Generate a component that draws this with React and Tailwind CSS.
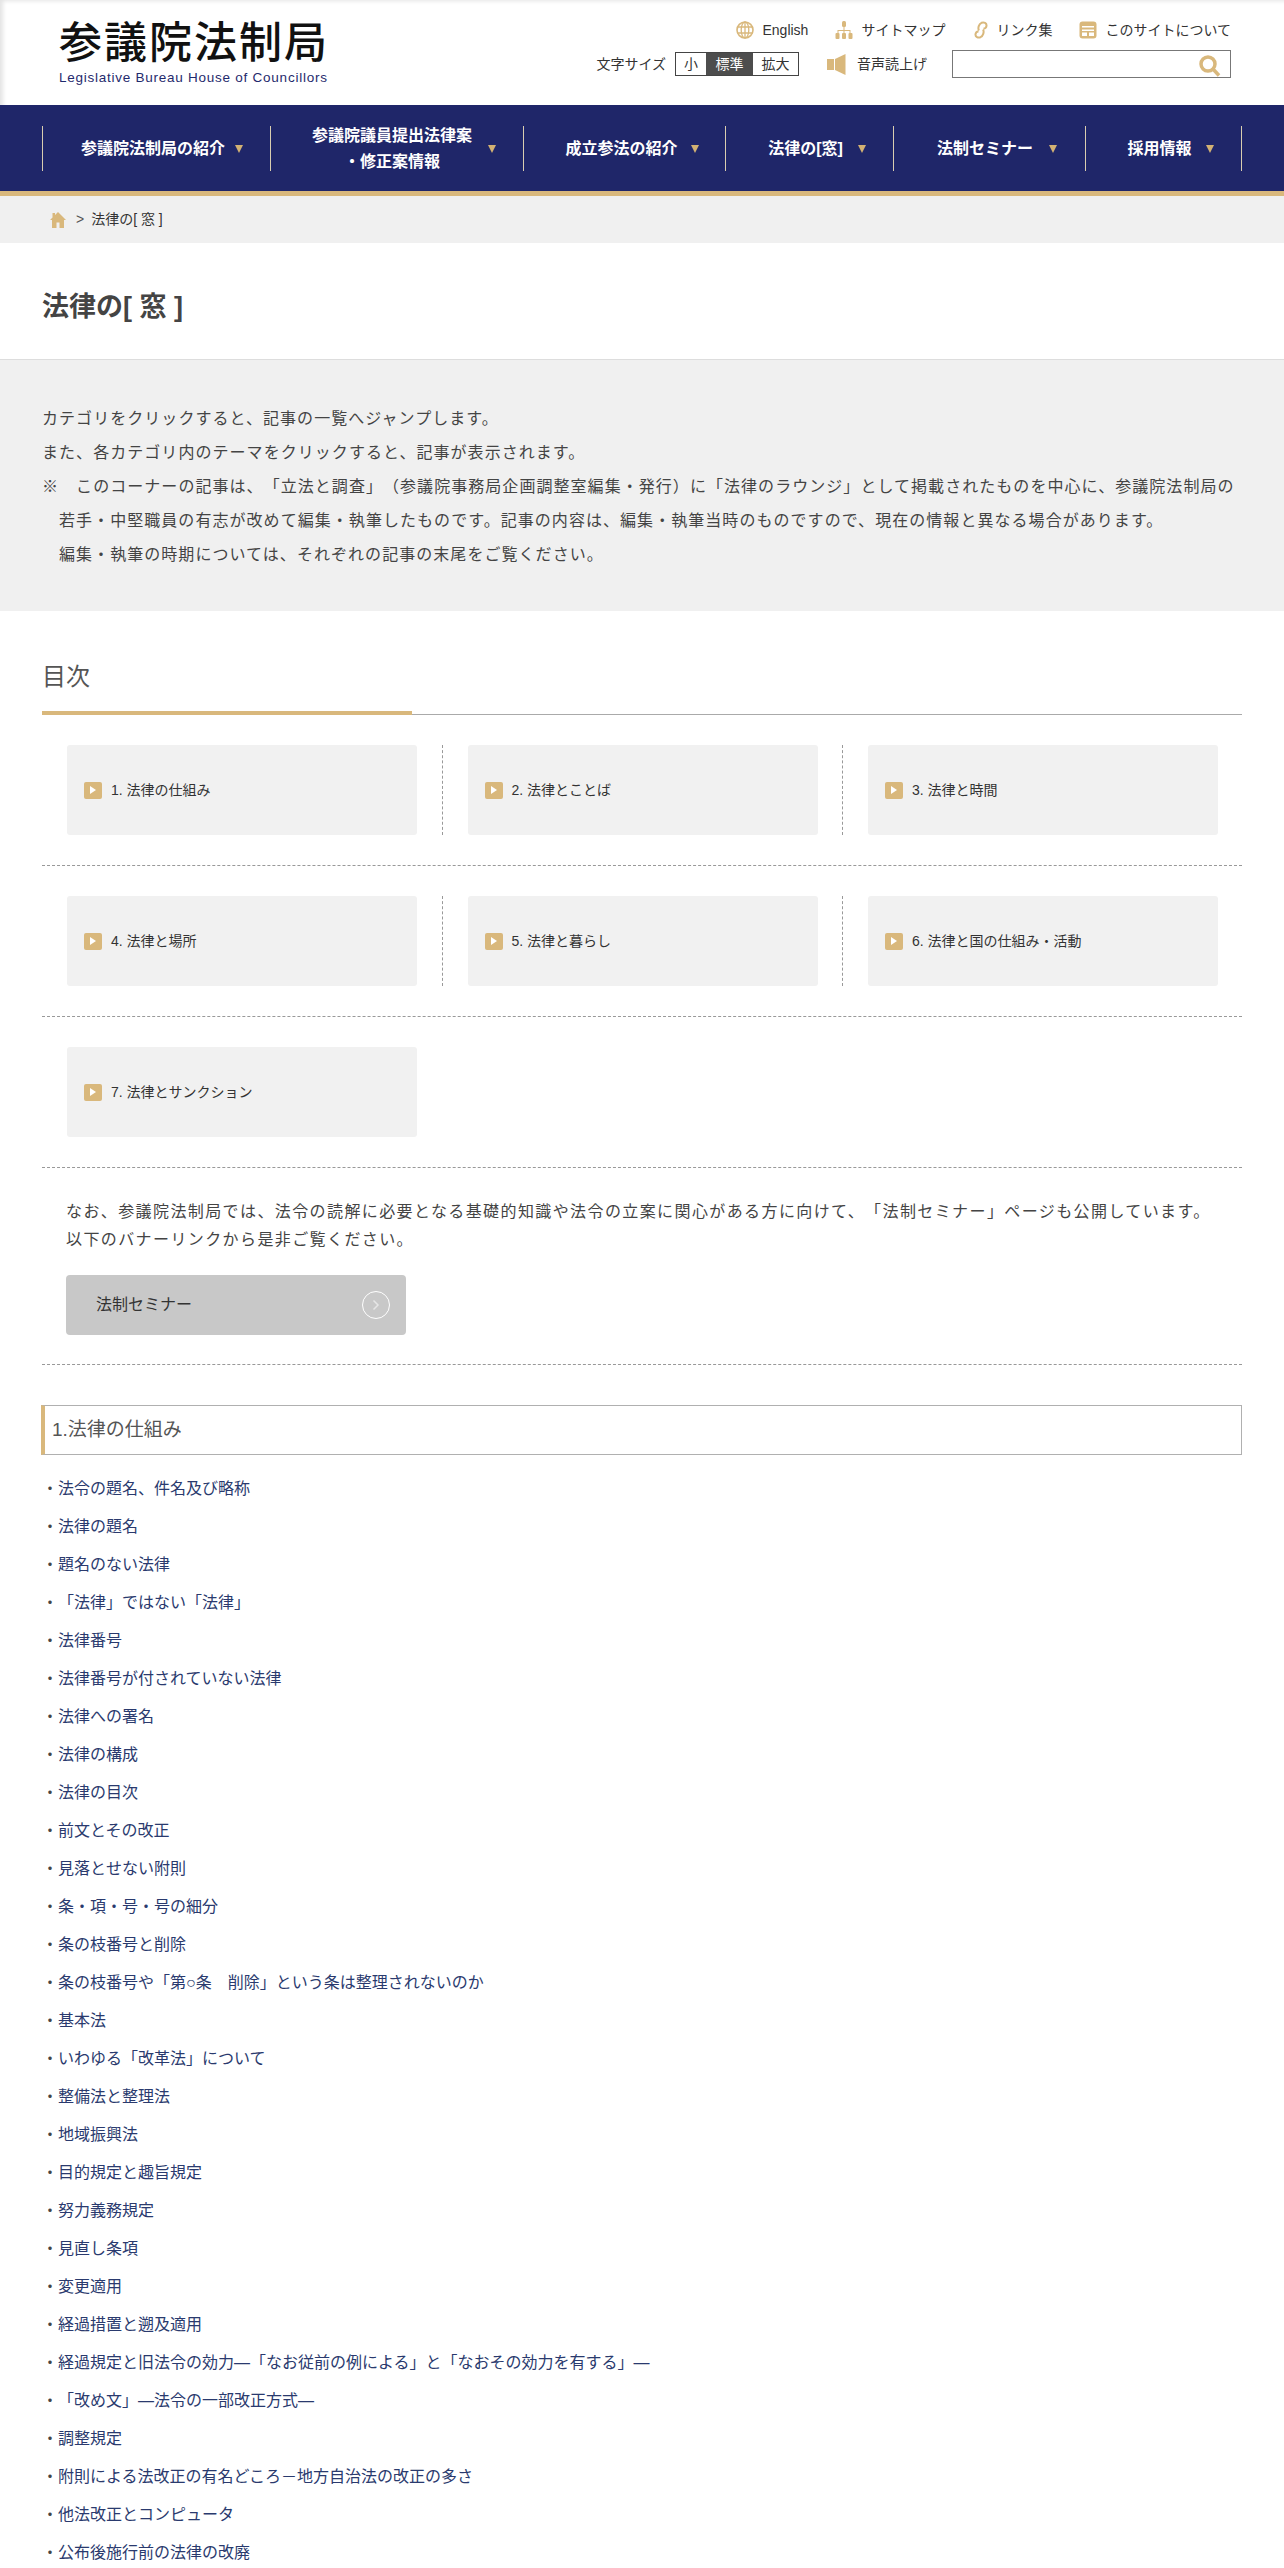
import { Fragment } from 'react';

const gold = '#d9b87c';

const navItems = [
    { label: ['参議院法制局の紹介'], cell: 'w-[228px] gap-[10px] pl-[11px]' },
    { label: ['参議院議員提出法律案', '・修正案情報'], cell: 'w-[253px] gap-[16px] pl-[14px]' },
    { label: ['成立参法の紹介'], cell: 'w-[202px] gap-[13px] pl-[15px]' },
    { label: ['法律の[窓]'], cell: 'w-[168px] gap-[15px] pl-[15px]' },
    { label: ['法制セミナー'], cell: 'w-[192px] gap-[16px] pl-[15px]' },
    { label: ['採用情報'], cell: 'w-[156px] gap-[14px] pl-[14px]' }
];

const tocRows = [
    ['1. 法律の仕組み', '2. 法律とことば', '3. 法律と時間'],
    ['4. 法律と場所', '5. 法律と暮らし', '6. 法律と国の仕組み・活動'],
    ['7. 法律とサンクション']
];

const links = [
    '法令の題名、件名及び略称',
    '法律の題名',
    '題名のない法律',
    '「法律」ではない「法律」',
    '法律番号',
    '法律番号が付されていない法律',
    '法律への署名',
    '法律の構成',
    '法律の目次',
    '前文とその改正',
    '見落とせない附則',
    '条・項・号・号の細分',
    '条の枝番号と削除',
    '条の枝番号や「第○条　削除」という条は整理されないのか',
    '基本法',
    'いわゆる「改革法」について',
    '整備法と整理法',
    '地域振興法',
    '目的規定と趣旨規定',
    '努力義務規定',
    '見直し条項',
    '変更適用',
    '経過措置と遡及適用',
    '経過規定と旧法令の効力―「なお従前の例による」と「なおその効力を有する」―',
    '「改め文」―法令の一部改正方式―',
    '調整規定',
    '附則による法改正の有名どころ－地方自治法の改正の多さ',
    '他法改正とコンピュータ',
    '公布後施行前の法律の改廃'
];

function GlobeIcon() {
    return (
        <svg width="18" height="18" viewBox="0 0 18 18" fill="none" stroke={gold} strokeWidth="1.300">
            <circle cx="9" cy="9" r="8" strokeWidth="1.600" />
            <ellipse cx="9" cy="9" rx="3.800" ry="8" />
            <path d="M9 1v16M1.500 6h15M1.500 12h15" />
        </svg>
    );
}

function SitemapIcon() {
    return (
        <svg width="18" height="18" viewBox="0 0 18 18" fill={gold}>
            <rect x="7" y="0" width="4" height="6" rx="1.5" />
            <path d="M8.5 6h1v3h6v3h-1v-2h-5v2h-1v-2h-5v2h-1V9h6z" />
            <rect x="0.5" y="12" width="4" height="6" rx="1" />
            <rect x="7" y="12" width="4" height="6" rx="1" />
            <rect x="13.5" y="12" width="4" height="6" rx="1" />
        </svg>
    );
}

function ClipIcon() {
    return (
        <svg width="14" height="18" viewBox="0 0 14 18" fill="none" stroke={gold} strokeWidth="2">
            <path d="M5 9.500 C3.500 7 5 3 7.500 1.800 C10 .8 12.800 2 12.500 4.800 C12.300 6.500 11 7.500 9.500 7.800" />
            <path d="M9 8.500 C10.500 11 9 15 6.500 16.200 C4 17.200 1.200 16 1.500 13.200 C1.700 11.500 3 10.500 4.500 10.200" />
        </svg>
    );
}

function AboutIcon() {
    return (
        <svg width="18" height="18" viewBox="0 0 18 18">
            <rect x="0.5" y="0.500" width="17" height="17" rx="3" fill={gold} />
            <rect x="3" y="5" width="12" height="1.500" fill="#fff" />
            <rect x="3" y="8.500" width="12" height="1.500" fill="#fff" />
            <rect x="3" y="11.500" width="5" height="3.500" fill="#fff" />
            <rect x="10" y="11.500" width="5" height="3.500" fill="#fff" />
        </svg>
    );
}

function SpeakerIcon() {
    return (
        <svg width="19" height="21" viewBox="0 0 19 21" fill={gold}>
            <rect x="0" y="5" width="7" height="11" />
            <path d="M8 5 L18.500 0 V21 L8 16 Z" />
        </svg>
    );
}

function SearchIcon() {
    return (
        <svg width="22" height="22" viewBox="0 0 22 22" fill="none" stroke={gold}>
            <circle cx="9" cy="9" r="7" strokeWidth="3.500" />
            <path d="M14 14l6 6.500" strokeWidth="3.500" />
        </svg>
    );
}

function HomeIcon() {
    return (
        <svg width="16" height="16" viewBox="0 0 16 16" fill={gold}>
            <path d="M8 0 L16 8 H14 V16 H9.500 V10.500 H6.500 V16 H2 V8 H0 L2.500 5.500 V1 H5 V3 Z" />
        </svg>
    );
}

function TopLink({ icon, label, className }) {
    return (
        <span className={`flex items-center ${className}`}>
            {icon}
            <span>{label}</span>
        </span>
    );
}

function Header() {
    return (
        <header className="h-[105px] flex justify-between bg-white shadow-[inset_5px_3px_4px_-2px_#e4e4e4]">
            <div className="pl-[59px] pt-[18px]">
                <div className="text-[43px] leading-[50px] tracking-[2px] text-[#111] font-medium whitespace-nowrap">
                    参議院法制局
                </div>
                <div className="text-[13.5px] leading-[16px] mt-[2px] tracking-[0.75px] text-[#1f2a6d] whitespace-nowrap">
                    Legislative Bureau House of Councillors
                </div>
            </div>
            <div className="pr-[53px] pt-[20px] flex flex-col items-end text-[14px] text-[#333]">
                <div className="flex items-center h-[20px]">
                    <TopLink className="gap-[8px]" icon={<GlobeIcon />} label="English" />
                    <TopLink className="gap-[8px] ml-[27px]" icon={<SitemapIcon />} label="サイトマップ" />
                    <TopLink className="gap-[8px] ml-[29px]" icon={<ClipIcon />} label="リンク集" />
                    <TopLink className="gap-[8px] ml-[27px]" icon={<AboutIcon />} label="このサイトについて" />
                </div>
                <div className="flex items-center mt-[10px] h-[28px]">
                    <span className="mr-[9px]">文字サイズ</span>
                    <div className="flex h-[24px] border border-[#444] leading-[22px] text-center">
                        <span className="w-[30px]">小</span>
                        <span className="w-[47px] bg-[#4d4d4d] text-white">標準</span>
                        <span className="w-[45px]">拡大</span>
                    </div>
                    <span className="ml-[28px]"><SpeakerIcon /></span>
                    <span className="ml-[11px]">音声読上げ</span>
                    <div className="ml-[25px] w-[279px] h-[28px] border border-[#777] flex items-center justify-end pr-[9px] pt-[4px]">
                        <SearchIcon />
                    </div>
                </div>
            </div>
        </header>
    );
}

function Nav() {
    return (
        <nav className="h-[91px] bg-[#1f2669] border-b-[5px] border-[#d9b87c] pl-[42px] pt-[21px]">
            <ul className="flex h-[45px] border-l border-[#d9cdb0] w-fit">
                {navItems.map((item) => (
                    <li key={item.label[0]} className={`${item.cell} border-r border-[#d9cdb0] flex items-center justify-center text-white font-bold text-[16px] leading-[26px]`}>
                        <span className="text-center whitespace-nowrap">
                            {item.label.map((line) => (
                                <div key={line}>{line}</div>
                            ))}
                        </span>
                        <span className="w-0 h-0 border-x-[4px] border-x-transparent border-t-[8px] border-t-[#d2b173] mt-[1px]" />
                    </li>
                ))}
            </ul>
        </nav>
    );
}

function Breadcrumb() {
    return (
        <div className="h-[47px] bg-[#f0f0f0] pl-[50px] flex items-center text-[14px] text-[#333]">
            <HomeIcon />
            <span className="ml-[10px] text-[#555]">&gt;</span>
            <span className="ml-[7px]">法律の[ 窓 ]</span>
        </div>
    );
}

function Intro() {
    return (
        <div className="bg-[#f0f0f0] border-t border-[#ddd] h-[252px] pl-[42px] pt-[42px] text-[16px] leading-[34px] tracking-[1.05px] text-[#444] whitespace-nowrap">
            <p>カテゴリをクリックすると、記事の一覧へジャンプします。</p>
            <p>また、各カテゴリ内のテーマをクリックすると、記事が表示されます。</p>
            <p>※　このコーナーの記事は、「立法と調査」（参議院事務局企画調整室編集・発行）に「法律のラウンジ」として掲載されたものを中心に、参議院法制局の</p>
            <p className="pl-[17px]">若手・中堅職員の有志が改めて編集・執筆したものです。記事の内容は、編集・執筆当時のものですので、現在の情報と異なる場合があります。</p>
            <p className="pl-[17px]">編集・執筆の時期については、それぞれの記事の末尾をご覧ください。</p>
        </div>
    );
}

function TocCard({ label }) {
    return (
        <a className="w-[350px] h-[90px] shrink-0 bg-[#f1f1f1] rounded-[3px] flex items-center pl-[17px] text-[14px] text-[#333]">
            <span className="w-[18px] h-[17px] bg-[#d9b87c] rounded-[2px] flex items-center justify-center mr-[9px]">
                <span className="w-0 h-0 border-y-[4px] border-y-transparent border-l-[6px] border-l-white" />
            </span>
            {label}
        </a>
    );
}

function Toc() {
    return (
        <section className="mx-[42px]">
            <h2 className="mt-[48px] text-[24px] leading-[36px] text-[#555] h-[52px]">目次</h2>
            <div className="h-[4px] border-b border-[#aaa] relative">
                <div className="w-[370px] h-[4px] bg-[#d9b87c]" />
            </div>
            {tocRows.map((row) => (
                <div key={row[0]} className="flex pt-[30px] pb-[30px] pl-[25px] border-b border-dashed border-[#999]">
                    {row.map((label, i) => (
                        <Fragment key={label}>
                            {i > 0 && <div className="w-[50.5px] flex justify-center"><div className="border-l border-dashed border-[#999]" /></div>}
                            <TocCard label={label} />
                        </Fragment>
                    ))}
                </div>
            ))}
            <div className="pl-[24px] pt-[30px] pb-[29px] border-b border-dashed border-[#999]">
                <p className="text-[16px] leading-[28px] tracking-[1.4px] text-[#444] whitespace-nowrap">
                    なお、参議院法制局では、法令の読解に必要となる基礎的知識や法令の立案に関心がある方に向けて、「法制セミナー」ページも公開しています。
                    <br />
                    以下のバナーリンクから是非ご覧ください。
                </p>
                <a className="mt-[21px] w-[340px] h-[60px] bg-[#c8c8c8] rounded-[4px] flex items-center justify-between pl-[30px] pr-[16px] text-[16px] text-[#333]">
                    法制セミナー
                    <span className="w-[28px] h-[28px] rounded-full border border-white flex items-center justify-center">
                        <svg width="8" height="12" viewBox="0 0 8 12" fill="none" stroke="#e6e6e6" strokeWidth="1.500">
                            <path d="M1.500 1.500L6 6l-4.500 4.500" />
                        </svg>
                    </span>
                </a>
            </div>
        </section>
    );
}

function LawList() {
    return (
        <section className="mx-[42px] mt-[40px]">
            <h3 className="-ml-[1px] h-[50px] border border-[#b0b0b0] border-l-[4px] border-l-[#d9b87c] pl-[7px] text-[19px] leading-[48px] text-[#555]">
                1.法律の仕組み
            </h3>
            <ul className="mt-[15px] text-[16px] leading-[38px] text-[#444]">
                {links.map((link) => (
                    <li key={link} className="whitespace-nowrap">
                        <span>・</span>
                        <a className="text-[#2a3a6e]">{link}</a>
                    </li>
                ))}
            </ul>
        </section>
    );
}

export default function App() {
    return (
        <div className="h-[2568px] overflow-hidden bg-white [text-spacing-trim:space-all] font-['Liberation_Sans','Noto_Sans_CJK_JP',sans-serif]">
            <Header />
            <Nav />
            <Breadcrumb />
            <div className="h-[116px] pl-[42px] pt-[12px] flex items-center text-[27px] font-bold text-[#444]">
                法律の[ 窓 ]
            </div>
            <Intro />
            <Toc />
            <LawList />
        </div>
    );
}
